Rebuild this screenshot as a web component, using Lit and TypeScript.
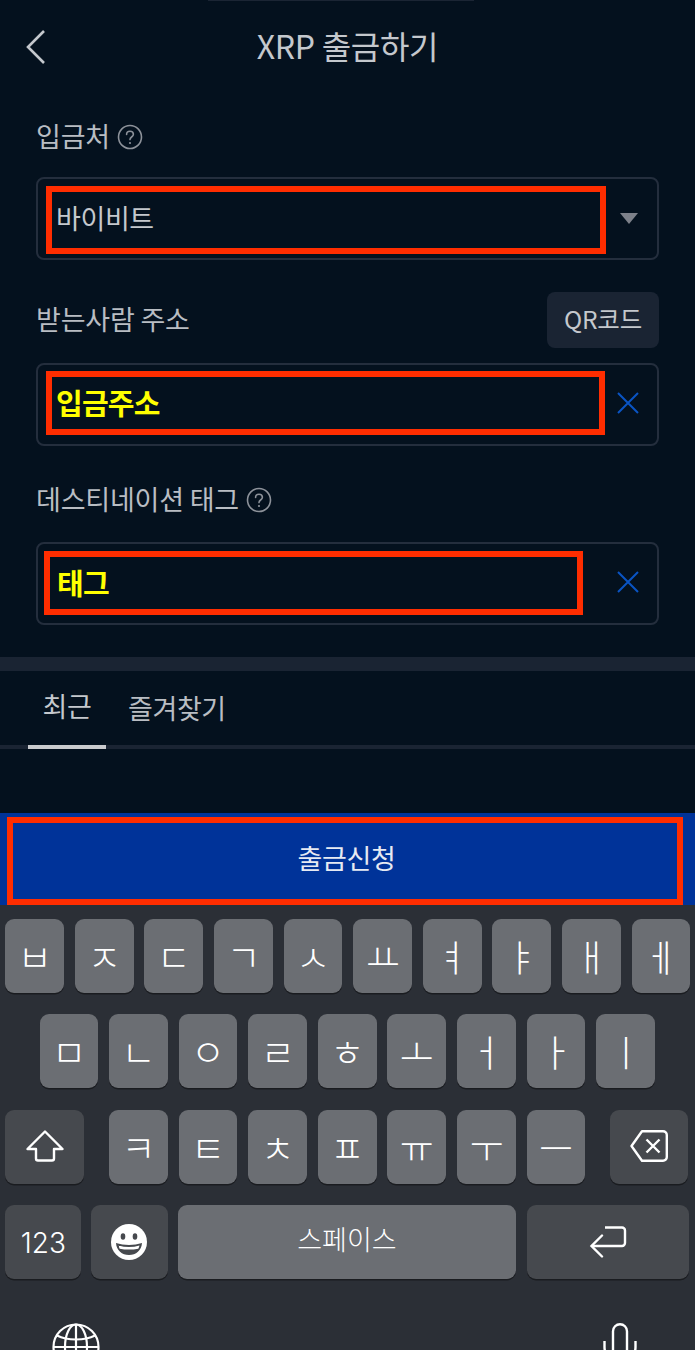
import { LitElement, html, css, svg } from 'lit'
import { customElement } from 'lit/decorators.js'

const ROW1 = ['ㅂ', 'ㅈ', 'ㄷ', 'ㄱ', 'ㅅ', 'ㅛ', 'ㅕ', 'ㅑ', 'ㅐ', 'ㅔ']
const ROW2 = ['ㅁ', 'ㄴ', 'ㅇ', 'ㄹ', 'ㅎ', 'ㅗ', 'ㅓ', 'ㅏ', 'ㅣ']
const ROW3 = ['ㅋ', 'ㅌ', 'ㅊ', 'ㅍ', 'ㅠ', 'ㅜ', 'ㅡ']

const help = html`
  <svg class="help" width="26" height="26" viewBox="0 0 26 26" fill="none">
    <circle cx="13" cy="13" r="11.500" stroke="#8d929a" stroke-width="1.600"/>
    <path d="M9.600 10.400c0-2 1.500-3.200 3.400-3.200s3.400 1.200 3.400 3c0 1.400-.8 2.100-1.800 2.800-1 .7-1.600 1.200-1.600 2.600" stroke="#8d929a" stroke-width="1.600" stroke-linecap="round"/>
    <circle cx="13" cy="19" r="1.100" fill="#8d929a"/>
  </svg>
`

const clear = html`
  <svg class="clear" width="22" height="22" viewBox="0 0 22 22" fill="none">
    <path d="M1 1l20 20M21 1L1 21" stroke="#0a54c4" stroke-width="2"/>
  </svg>
`

@customElement('app-root')
export class AppRoot extends LitElement {
  static styles = css`
    :host {
      display: block;
      width: 695px;
      height: 1350px;
      overflow: hidden;
      background: #04111e;
      font-family: "Noto Sans CJK KR", "Noto Sans", sans-serif;
      color: #b9bdc3;
    }
    * { box-sizing: border-box; }

    .notch {
      height: 1px;
      margin: 0 221px 0 208px;
      background: #1b2534;
    }
    .header {
      height: 93px;
      padding-bottom: 6px;
      position: relative;
      display: flex;
      align-items: center;
      justify-content: center;
      font-size: 32px;
      letter-spacing: -0.3px;
      color: #c4c8cd;
    }
    .header svg { position: absolute; left: 25px; top: 28px; }

    .form { padding: 15px 36px 0; }
    .row {
      height: 56px;
      display: flex;
      align-items: center;
      font-size: 27px;
      letter-spacing: -0.2px;
    }
    .txt { padding-bottom: 3px; }
    .row .help { margin-left: 7px; }
    .row .qr {
      margin-left: auto;
      width: 112px;
      height: 56px;
      padding-bottom: 3px;
      border-radius: 8px;
      background: #1a2433;
      display: flex;
      align-items: center;
      justify-content: center;
      color: #c4c8cd;
      font-size: 24.500px;
    }
    .r2 { margin-top: 32px; }
    .r3 { margin-top: 26px; }

    .field {
      height: 83px;
      margin-top: 14px;
      border: 2px solid #242e3d;
      border-radius: 8px;
      display: flex;
      align-items: flex-start;
      position: relative;
    }
    .f1 { margin-top: 12px; }
    .f2 { margin-top: 15px; }

    .mark {
      border: 6px solid #ff2d00;
      display: flex;
      align-items: center;
      padding-left: 4px;
      font-size: 27px;
      letter-spacing: -0.4px;
    }
    .f1 .mark { margin: 7px 0 0 8px; width: 560px; height: 68px; color: #c4c8cd; padding-bottom: 5px; }
    .f2 .mark { margin: 6px 0 0 8px; width: 559px; height: 64px; padding-bottom: 2px; }
    .f3 .mark { margin: 7px 0 0 6px; width: 539px; height: 64px; padding: 0 0 2px 7px; }
    .filled { color: #ffff00; font-weight: 700; font-size: 29px; letter-spacing: -0.8px; }

    .caret {
      margin: 34px 0 0 14px;
      width: 0;
      height: 0;
      border-left: 9px solid transparent;
      border-right: 9px solid transparent;
      border-top: 11px solid #7d818a;
    }
    .f2 .clear { margin: 27px 0 0 12px; }
    .f3 .clear { margin: 27px 0 0 34px; }

    .band { height: 14px; margin-top: 32px; background: #1a2433; }

    .tabs {
      height: 78px;
      border-bottom: 4px solid #1a2433;
      display: flex;
      padding-left: 28px;
      font-size: 27px;
      letter-spacing: -0.4px;
    }
    .tab {
      height: 78px;
      display: flex;
      align-items: center;
      padding-bottom: 6px;
    }
    .tab.active {
      width: 78px;
      justify-content: center;
      border-bottom: 4px solid #c9cbce;
      color: #c4c8cd;
    }
    .tab.fav { margin-left: 22px; }

    .submit {
      height: 92px;
      margin-top: 64px;
      padding: 4px 12px 0 7px;
      background: #003399;
    }
    .submit div {
      height: 88px;
      padding: 0 0 8px 3px;
      border: 6px solid #ff2d00;
      display: flex;
      align-items: center;
      justify-content: center;
      color: #e6eaf3;
      font-size: 27px;
      letter-spacing: -0.4px;
    }

    .keyboard {
      height: 445px;
      padding-top: 14px;
      background: #2b2f36;
      display: flex;
      flex-direction: column;
    }
    .keys {
      height: 74px;
      margin-bottom: 21.300px;
      display: flex;
      gap: 10.800px;
      padding: 0 5.300px;
    }
    .keys.home { padding: 0 39.500px; }
    .keys.bottom { gap: 9.700px; }
    .key {
      width: 58.800px;
      height: 74px;
      flex: none;
      border-radius: 9px;
      background: #6b6e73;
      box-shadow: 0 1.500px 0 #1a1c20;
      color: #fff;
      display: flex;
      align-items: center;
      justify-content: center;
      font-size: 37px;
      font-weight: 300;
    }
    .key.fn { background: #46494e; }
    .key.shift { width: 79px; margin-right: 14px; padding-bottom: 2px; }
    .key.back { width: 78px; margin-left: 14px; padding-bottom: 2px; }
    .key.num { width: 76px; padding-top: 3px; font-size: 28px; font-family: "Inter", sans-serif; font-weight: 300; }
    .key.emoji { width: 77px; }
    .key.space { width: 338.500px; font-size: 27px; padding-bottom: 6px; }
    .key.ret { width: 162px; margin-left: 1px; }

    .sys {
      display: flex;
      justify-content: space-between;
      padding: 23px 58px 0 52px;
    }
  `

  render () {
    return html`
      <div class="notch"></div>
      <div class="header">
        <svg width="22" height="36" viewBox="0 0 22 36" fill="none">
          <path d="M19 2L3 18l16 16" stroke="#c4c8cd" stroke-width="2.600"/>
        </svg>
        XRP 출금하기
      </div>

      <div class="form">
        <div class="row"><span class="txt">입금처</span>${help}</div>
        <div class="field f1">
          <div class="mark">바이비트</div>
          <div class="caret"></div>
        </div>

        <div class="row r2"><span class="txt">받는사람 주소</span><div class="qr">QR코드</div></div>
        <div class="field f2">
          <div class="mark"><span class="filled">입금주소</span></div>
          ${clear}
        </div>

        <div class="row r3"><span class="txt">데스티네이션 태그</span>${help}</div>
        <div class="field f3">
          <div class="mark"><span class="filled">태그</span></div>
          ${clear}
        </div>
      </div>

      <div class="band"></div>

      <div class="tabs">
        <div class="tab active">최근</div>
        <div class="tab fav">즐겨찾기</div>
      </div>

      <div class="submit"><div>출금신청</div></div>

      <div class="keyboard">
        <div class="keys">${ROW1.map(k => html`<div class="key">${k}</div>`)}</div>
        <div class="keys home">${ROW2.map(k => html`<div class="key">${k}</div>`)}</div>
        <div class="keys">
          <div class="key fn shift">${this.shiftIcon()}</div>
          ${ROW3.map(k => html`<div class="key">${k}</div>`)}
          <div class="key fn back">${this.backIcon()}</div>
        </div>
        <div class="keys bottom">
          <div class="key fn num">123</div>
          <div class="key fn emoji">${this.emojiIcon()}</div>
          <div class="key space">스페이스</div>
          <div class="key fn ret">${this.returnIcon()}</div>
        </div>
        <div class="sys">
          <svg width="48" height="48" viewBox="0 0 48 48" fill="none" stroke="#fff" stroke-width="2.200">
            ${svg`
              <circle cx="24" cy="24" r="22.500"/>
              <ellipse cx="24" cy="24" rx="11" ry="22.500"/>
              <path d="M24 1.500v45M1.500 24h45M5 12.500c5 2.600 11.500 4 19 4s14-1.400 19-4"/>
            `}
          </svg>
          <svg width="34" height="48" viewBox="0 0 34 48" fill="none" stroke="#fff" stroke-width="2.400">
            ${svg`
              <rect x="10" y="1.200" width="14" height="34" rx="7"/>
              <path d="M1.500 18v6c0 9 7 15.500 15.500 15.500S32.500 33 32.500 24v-6"/>
            `}
          </svg>
        </div>
      </div>
    `
  }

  shiftIcon () {
    return html`<svg width="38" height="32" viewBox="0 0 38 32" fill="none">
      <path d="M19 1.500L36.500 19H28v9.500a2 2 0 0 1-2 2H12a2 2 0 0 1-2-2V19H1.500z" stroke="#fff" stroke-width="2.400" stroke-linejoin="round"/>
    </svg>`
  }

  backIcon () {
    return html`<svg width="38" height="32" viewBox="0 0 38 32" fill="none" stroke="#fff" stroke-width="2.400">
      <path d="M12 1.200h21a3.800 3.800 0 0 1 3.800 3.800v22a3.800 3.800 0 0 1-3.800 3.800H12L1.500 16z" stroke-linejoin="round"/>
      <path d="M16.500 9.500l13 13M29.500 9.500l-13 13"/>
    </svg>`
  }

  emojiIcon () {
    return html`<svg width="36" height="36" viewBox="0 0 36 36">
      <circle cx="18" cy="18" r="18" fill="#fff"/>
      <ellipse cx="12" cy="12.500" rx="2.300" ry="3.200" fill="#46494e"/>
      <ellipse cx="24" cy="12.500" rx="2.300" ry="3.200" fill="#46494e"/>
      <path d="M5 19c4 1.300 8.500 2 13 2s9-.7 13-2c-.5 7.500-6 12-13 12S5.500 26.500 5 19z" fill="#46494e"/>
      <path d="M7.500 21.500c3.500 1 7 1.500 10.500 1.500s7-.5 10.500-1.500c-.3 1.300-.7 2.300-1.200 3.200-3 .6-6.200.9-9.300.9s-6.300-.3-9.300-.9c-.5-.9-.9-1.900-.7-3.200z" fill="#fff"/>
    </svg>`
  }

  returnIcon () {
    return html`<svg width="38" height="32" viewBox="0 0 38 32" fill="none" stroke="#fff" stroke-width="2.400">
      <path d="M16 1.500h17a3 3 0 0 1 3 3V17a3 3 0 0 1-3 3H3"/>
      <path d="M13 9.500L2.500 20 13 30.500" stroke-linecap="round"/>
    </svg>`
  }
}
